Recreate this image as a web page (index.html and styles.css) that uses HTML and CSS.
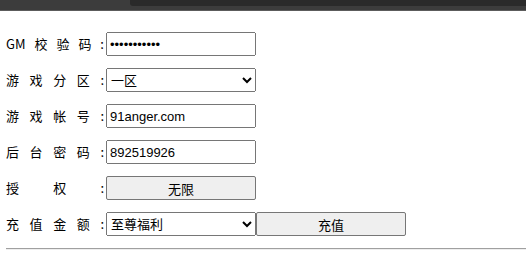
FILE: index.html
```html
<!DOCTYPE html>
<html lang="zh-CN">
<head>
  <meta charset="UTF-8">
  <title>充值</title>
  <link rel="stylesheet" href="styles.css">
</head>
<body>
  <div class="topbar"><div class="tab"></div></div>
  <div class="page">
    <form class="recharge">
      <div class="row">
        <span class="label">GM校验码:</span>
        <input class="field" type="password" value="abcdefghijk">
      </div>
      <div class="row">
        <span class="label">游戏分区:</span>
        <select class="field">
          <option>一区</option>
        </select>
      </div>
      <div class="row">
        <span class="label">游戏帐号:</span>
        <input class="field" type="text" value="91anger.com">
      </div>
      <div class="row">
        <span class="label">后台密码:</span>
        <input class="field" type="text" value="892519926">
      </div>
      <div class="row">
        <span class="label">授权:</span>
        <button class="field btn" type="button">无限</button>
      </div>
      <div class="row">
        <span class="label">充值金额:</span>
        <select class="field">
          <option>至尊福利</option>
        </select>
        <button class="field btn" type="button">充值</button>
      </div>
    </form>
    <hr class="line">
  </div>
</body>
</html>
```

FILE: styles.css
```css
body {
  margin: 0;
  font-family: "Noto Sans CJK SC", "Liberation Sans", sans-serif;
  font-size: 13px;
  color: #000;
  background: #fff;
}
.topbar {
  height: 10px;
  background: #3c3c3c;
  border-bottom: 1px solid #5c5c5c;
}
.tab {
  margin-left: 130px;
  height: 6px;
  background: #2a2a2a;
  border-bottom-left-radius: 3px;
}
.page {
  padding: 21px 0 0 6px;
}
.row {
  display: flex;
  align-items: center;
  height: 24px;
  margin-bottom: 12px;
}
.label {
  width: 98px;
  margin-right: 2px;
  text-align: justify;
  text-align-last: justify;
  line-height: 24px;
  white-space: nowrap;
}
.field {
  box-sizing: border-box;
  width: 150px;
  height: 24px;
  margin: 0;
  font-family: "Liberation Sans", "Noto Sans CJK SC", sans-serif;
  font-size: 13px;
  color: #000;
}
.btn {
  background: #efefef;
  border: 1px solid #767676;
  border-radius: 2px;
}
.line {
  margin: 10px 0 0;
  border: 0;
  border-top: 1px solid #a0a0a0;
  border-bottom: 1px solid #eee;
}
```
